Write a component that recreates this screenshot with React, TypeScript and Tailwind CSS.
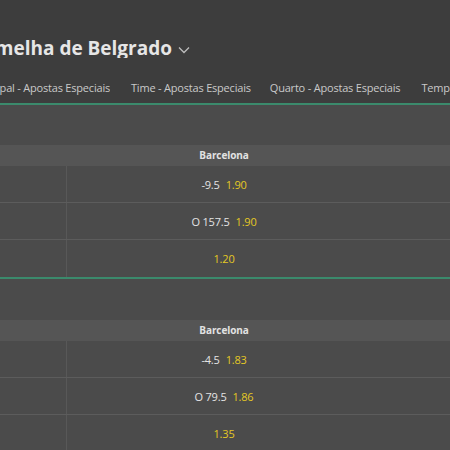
import React from "react";

const font = { fontFamily: '"Open Sans", "Noto Sans", sans-serif' };

type Row = { line?: string; odd: string };

function Section({ rows, first }: { rows: Row[]; first?: boolean }) {
  return (
    <div className="border-b-2 border-[#3b8a6c]">
      <div className={first ? "h-[40px]" : "h-[41px]"} />
      <div className="flex h-[21px] bg-[#555555] items-center">
        <div className="w-[67px] shrink-0" />
        <div className="w-[314px] shrink-0 text-center text-[10px] tracking-[-0.1px] font-bold text-[#e2e2e2]">Barcelona</div>
      </div>
      {rows.map((r, i) => (
        <div key={i} className={`flex h-[37px] ${i < rows.length - 1 ? "border-b border-[#5c5c5c]" : ""}`}>
          <div className="w-[67px] shrink-0 border-r border-[#585858]" />
          <div className="w-[314px] shrink-0 flex items-center justify-center gap-[6px] pt-[2px] text-[11px] tracking-[-0.2px]">
            {r.line && <span className="text-[#e4e4e4]">{r.line}</span>}
            <span className="text-[#e4c824]">{r.odd}</span>
          </div>
          <div className="flex-1" />
        </div>
      ))}
    </div>
  );
}

export default function App() {
  return (
    <div className="w-[450px] h-[450px] overflow-hidden bg-[#4b4b4b]" style={font}>
      <div className="h-[103px] bg-[#3d3d3d] flex flex-col">
        <div className="h-[33px]" />
        <div className="flex items-center h-[30px]">
          <div className="w-[172px] shrink-0 flex justify-end overflow-hidden whitespace-nowrap">
            <span className="text-[19px] font-bold text-[#e6e6e6] leading-none">Estrela Vermelha de Belgrado</span>
          </div>
          <svg width="12" height="8" viewBox="0 0 12 8" className="ml-[6px] mt-[4px] shrink-0">
            <path d="M1 1.5 L6 6.5 L11 1.5" fill="none" stroke="#bdbdbd" strokeWidth="1.3" />
          </svg>
        </div>
        <div className="h-[17px]" />
        <div className="flex items-center text-[11px] tracking-[-0.2px] text-[#c9c9c9] whitespace-nowrap">
          <div className="w-[110px] shrink-0 flex justify-end overflow-hidden">
            <span>Principal - Apostas Especiais</span>
          </div>
          <span className="ml-[21px] shrink-0">Time - Apostas Especiais</span>
          <span className="ml-[19px] shrink-0">Quarto - Apostas Especiais</span>
          <span className="ml-[21px] shrink-0">Tempo - Apostas Especiais</span>
        </div>
      </div>
      <div className="h-[2px] bg-[#3b8a6c]" />
      <Section
        first
        rows={[
          { line: "-9.5", odd: "1.90" },
          { line: "O 157.5", odd: "1.90" },
          { odd: "1.20" },
        ]}
      />
      <Section
        rows={[
          { line: "-4.5", odd: "1.83" },
          { line: "O 79.5", odd: "1.86" },
          { odd: "1.35" },
        ]}
      />
    </div>
  );
}
